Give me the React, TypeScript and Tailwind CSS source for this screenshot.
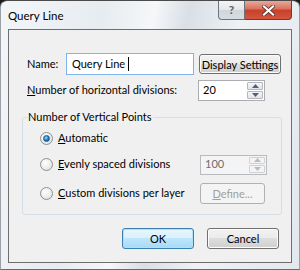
import React from 'react';

const font = { fontFamily: 'Lato, "Noto Sans", sans-serif' };

const Button: React.FC<{ label: React.ReactNode; className?: string; primary?: boolean; disabled?: boolean }> = ({ label, className = '', primary, disabled }) => {
    const base = 'flex items-center justify-center rounded-[3px] border text-[11px] leading-none whitespace-nowrap';
    const look = disabled
        ? 'border-[#adb2b5] bg-[#f4f4f4] text-[#a0a0a0]'
        : primary
            ? 'border-[#3c7fb1] bg-[linear-gradient(#eaf6fd_0%,#d9f0fc_50%,#bee6fd_50%,#a7d9f5_100%)] text-black shadow-[inset_0_0_0_1px_#aee0f6]'
            : 'border-[#707070] bg-[linear-gradient(#f2f2f2_0%,#ebebeb_50%,#dddddd_50%,#cfcfcf_100%)] text-black shadow-[inset_0_0_0_1px_#fcfcfc]';
    return <div className={`${base} ${look} ${className}`}>{label}</div>;
};

const SpinBox: React.FC<{ value: string; disabled?: boolean; className?: string }> = ({ value, disabled, className = '' }) => (
    <div className={`flex items-stretch border ${disabled ? 'border-[#b8bcc0] bg-[#f4f4f4] text-[#6d6d6d]' : 'border-[#abadb3] bg-white text-black'} ${className}`}>
        <div className="flex-1 flex items-center pl-[4px] text-[11px]">{value}</div>
        <div className="flex flex-col w-[17px] gap-[1px] py-[1px] pr-[1px]">
            {['up', 'down'].map(dir => (
                <div
                    key={dir}
                    className={`flex-1 flex items-center justify-center border rounded-[1px] ${disabled ? 'border-[#d0d3d6] bg-[#f4f4f4]' : 'border-[#b4b8bd] bg-[linear-gradient(#f6f6f6,#e2e4e7)]'}`}
                >
                    <svg width="7" height="4" viewBox="0 0 7 4">
                        {dir === 'up'
                            ? <path d="M0 4 L3.5 0 L7 4 Z" fill={disabled ? '#b8bcc0' : '#4b5f8c'} />
                            : <path d="M0 0 L3.5 4 L7 0 Z" fill={disabled ? '#b8bcc0' : '#4b5f8c'} />}
                    </svg>
                </div>
            ))}
        </div>
    </div>
);

const Radio: React.FC<{ checked?: boolean; children: React.ReactNode }> = ({ checked, children }) => (
    <div className="flex items-center gap-[5px] text-[11px] text-black whitespace-nowrap">
        <div className="w-[13px] h-[13px] rounded-full border border-[#8e8f8f] bg-[radial-gradient(circle_at_40%_35%,#ffffff,#dcdcdc)] flex items-center justify-center">
            {checked && (
                <div className="w-[7px] h-[7px] rounded-full bg-[radial-gradient(circle_at_40%_35%,#8ce2ff,#1b6fb5_60%,#0d4a8a)] border border-[#1a5a93]" />
            )}
        </div>
        <span>{children}</span>
    </div>
);

const App: React.FC = () => {
    return (
        <div className="w-[300px] h-[270px] overflow-hidden bg-[#1a1a1a]" style={font}>
            <div className="w-[300px] h-[270px] rounded-t-[7px] border border-t-[#4a4a4a] border-x-[#9aa0a6] border-b-[#6a6a6a] bg-[linear-gradient(100deg,#f3f6f9_0%,#e7ecf0_30%,#f5f7f9_45%,#d9dfe5_55%,#eef2f5_70%,#e2e8ee_100%)] flex flex-col">
                <div className="h-[28px] flex items-start">
                    <div className="pl-[7px] pt-[6px] text-[11.5px] text-black">Query Line</div>
                    <div className="ml-auto mr-[7px] flex">
                        <div className="w-[27px] h-[19px] rounded-bl-[4px] border border-t-0 border-[#6b7580] bg-[linear-gradient(#f2f4f6_0%,#e3e7eb_50%,#cfd5db_50%,#d9dee3_100%)] flex items-center justify-center">
                            <span className="text-[12px] leading-none text-[#5a6068] font-bold">?</span>
                        </div>
                        <div className="w-[47px] h-[19px] rounded-br-[4px] border border-l-0 border-t-0 border-[#6b3a30] bg-[linear-gradient(#e9a99a_0%,#d8705c_45%,#c7402a_50%,#d4553d_100%)] flex items-center justify-center">
                            <svg width="13" height="11" viewBox="0 0 13 11">
                                <path d="M2 1.5 L11 9.5 M11 1.5 L2 9.5" stroke="#4a2a25" strokeWidth="3.6" strokeLinecap="square" />
                                <path d="M2 1.5 L11 9.5 M11 1.5 L2 9.5" stroke="#ffffff" strokeWidth="2.2" strokeLinecap="square" />
                            </svg>
                        </div>
                    </div>
                </div>

                <div className="mx-[7px] h-[234px] border border-[#6e6e6e] bg-[#f0f0f0] flex flex-col text-[11px] text-black whitespace-nowrap">
                    <div className="flex items-center mt-[23px] h-[22px]">
                        <span className="ml-[18px] w-[38px]">Name:</span>
                        <div className="ml-[1px] w-[128px] h-[22px] border border-[#7eb4ea] bg-white flex items-center pl-[5px]">
                            Query Line<span className="ml-[3px] inline-block w-[1px] h-[14px] bg-black" />
                        </div>
                        <Button label="Display Settings" className="ml-[5px] w-[82px] h-[20px]" />
                    </div>

                    <div className="flex items-center mt-[5px] h-[21px]">
                        <span className="ml-[18px] w-[171px]"><u>N</u>umber of horizontal divisions:</span>
                        <SpinBox value="20" className="w-[67px] h-[21px]" />
                    </div>

                    <div className="relative mt-[16px] ml-[13px] w-[260px] h-[98px] border border-[#d5dfe5] rounded-[3px] flex flex-col">
                        <span className="absolute -top-[9px] left-[4px] bg-[#f0f0f0] px-[1px] leading-[16px]">Number of Vertical Points</span>
                        <div className="mt-[12px] ml-[17px]">
                            <Radio checked><u>A</u>utomatic</Radio>
                        </div>
                        <div className="mt-[8px] ml-[17px] flex items-center h-[20px]">
                            <div className="w-[160px]">
                                <Radio><u>E</u>venly spaced divisions</Radio>
                            </div>
                            <SpinBox value="100" disabled className="w-[67px] h-[20px]" />
                        </div>
                        <div className="mt-[8px] ml-[17px] flex items-center h-[21px]">
                            <div className="w-[160px]">
                                <Radio><u>C</u>ustom divisions per layer</Radio>
                            </div>
                            <Button label={<><u>D</u>efine...</>} disabled className="w-[65px] h-[21px]" />
                        </div>
                    </div>

                    <div className="flex mt-[13px] ml-[113px] gap-[13px]">
                        <Button label="OK" primary className="w-[72px] h-[21px]" />
                        <Button label="Cancel" className="w-[72px] h-[21px]" />
                    </div>
                </div>
            </div>
        </div>
    );
};

export default App;
